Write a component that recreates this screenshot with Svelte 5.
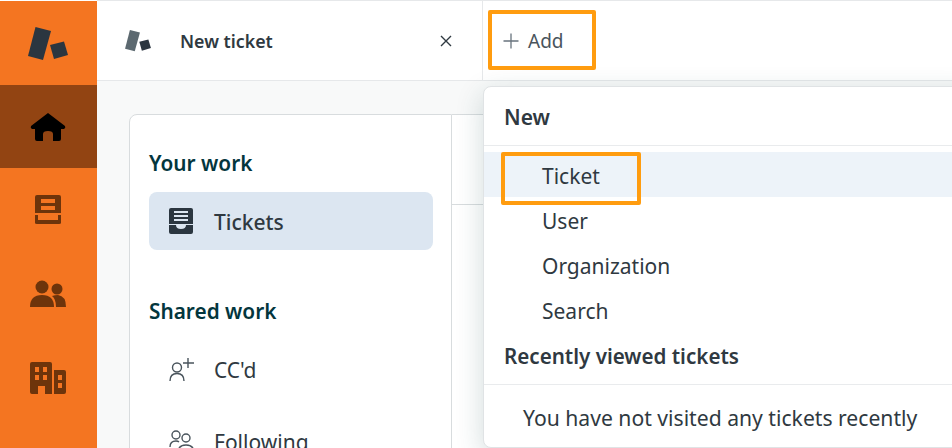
<script>
  const navItems = [
    { id: 'home', active: true },
    { id: 'inbox' },
    { id: 'users' },
    { id: 'org' }
  ]
  const newItems = ['Ticket', 'User', 'Organization', 'Search']
</script>

{#snippet logo(a, b)}
  <svg viewBox="0 0 40 34" width="40" height="34">
    <path fill={a} d="M7.500 0 L23 4 L15 33 L0 29 Z" />
    <path fill={b} d="M22 18 L36 14.500 L40 28 L26 32 Z" />
  </svg>
{/snippet}

<div class="app">
  <nav class="sidebar">
    <div class="brand">{@render logo('#2b3640', '#2b3640')}</div>
    {#each navItems as item}
      <div class="nav-item" class:active={item.active}>
        {#if item.id === 'home'}
          <svg viewBox="0 0 36 30" width="36" height="30"><path fill="#000" d="M18 1 L35 14 Q36 16 34 17 L31 17 V27 Q31 29 29 29 H23 V22 Q23 19 18 19 Q13 19 13 22 V29 H7 Q5 29 5 27 V17 L2 17 Q0 16 1 14 Z" /></svg>
        {:else if item.id === 'inbox'}
          <svg viewBox="0 0 26 30" width="26" height="30"><path fill="#6d340b" fill-rule="evenodd" d="M2 0 H24 Q26 0 26 2 V18 H0 V2 Q0 0 2 0 Z M6 4 V8 H20 V4 Z M6 11 V15 H20 V11 Z" /><path fill="#6d340b" d="M0 20 H3 V25 H23 V20 H26 V28 Q26 29 24 29 H2 Q0 29 0 28 Z" /></svg>
        {:else if item.id === 'users'}
          <svg viewBox="0 0 36 28" width="36" height="28"><circle cx="12" cy="7" r="6.500" fill="#6d340b" /><circle cx="27" cy="9" r="5.500" fill="#6d340b" /><path fill="#6d340b" d="M0 27 Q0 15 12 15 Q24 15 24 27 Z" /><path fill="#6d340b" d="M26 27 Q26 19 22 16 Q25 15 28 15 Q36 16 36 27 Z" /></svg>
        {:else}
          <svg viewBox="0 0 36 32" width="36" height="32"><path fill="#6d340b" fill-rule="evenodd" d="M2 0 H20 Q22 0 22 2 V32 H15 V24 H8 V32 H2 Q0 32 0 30 V2 Q0 0 2 0 Z M5 5 V10 H9 V5 Z M13 5 V10 H17 V5 Z M5 13 V18 H9 V13 Z M13 13 V18 H17 V13 Z" /><path fill="#6d340b" fill-rule="evenodd" d="M24 8 H34 Q36 8 36 10 V30 Q36 32 34 32 H24 Z M28 13 V18 H32 V13 Z M28 21 V26 H32 V21 Z" /></svg>
        {/if}
      </div>
    {/each}
  </nav>

  <main class="main">
    <header class="tabs">
      <div class="tab">
        <span class="tab-logo">{@render logo('#5c6970', '#2b3640')}</span>
        <span class="tab-title">New ticket</span>
        <svg class="close" viewBox="0 0 12 12" width="12" height="12"><path d="M1 1 L11 11 M11 1 L1 11" stroke="#2f3941" stroke-width="1.400" fill="none" /></svg>
      </div>
      <div class="add">
        <svg viewBox="0 0 16 16" width="16" height="16"><path d="M8 0.500 V15.500 M0.500 8 H15.500" stroke="#68737d" stroke-width="1.300" fill="none" /></svg>
        <span>Add</span>
      </div>
    </header>

    <div class="content">
      <section class="panel">
        <h2>Your work</h2>
        <div class="views selected">
          <svg viewBox="0 0 24 26" width="24" height="26"><path fill="#2b3640" fill-rule="evenodd" d="M2 0 H22 Q24 0 24 2 V16 H0 V2 Q0 0 2 0 Z M5 3 V5 H19 V3 Z M5 7 V9 H19 V7 Z M5 11 V13 H19 V11 Z" /><path fill="#2b3640" d="M0 17 H7 Q7 21 12 21 Q17 21 17 17 H24 V24 Q24 26 22 26 H2 Q0 26 0 24 Z" /></svg>
          <span>Tickets</span>
        </div>
        <h2 class="shared">Shared work</h2>
        <div class="views first">
          <svg viewBox="0 0 26 24" width="26" height="24" fill="none" stroke="#49545c" stroke-width="1.400"><circle cx="8" cy="9.500" r="4.500" /><path d="M1 23 Q1 15.500 8 15.500 Q15 15.500 15 23" /><path d="M19 0 V10 M14 5 H25" /></svg>
          <span>CC'd</span>
        </div>
        <div class="views">
          <svg viewBox="0 0 26 24" width="26" height="24" fill="none" stroke="#49545c" stroke-width="1.400"><circle cx="7" cy="5" r="4" /><circle cx="17" cy="8" r="4" /><path d="M1 17 Q1 11 7 11 Q9 11 10 12" /><path d="M9 23 Q9 15 17 15 Q25 15 25 23" /></svg>
          <span>Following</span>
        </div>
      </section>
      <section class="list">
        <div class="list-head"></div>
      </section>
    </div>
  </main>

  <aside class="popover">
    <div class="pop-head">New</div>
    <ul>
      {#each newItems as label, i}
        <li class:hover={i === 0}>{label}</li>
      {/each}
    </ul>
    <div class="pop-sub">Recently viewed tickets</div>
    <p class="empty">You have not visited any tickets recently</p>
  </aside>

  <div class="mark mark-add"></div>
  <div class="mark mark-ticket"></div>
</div>

<style>
  :global(body) {
    margin: 0;
    background: #fff;
  }

  .app {
    position: relative;
    display: flex;
    width: 952px;
    height: 448px;
    overflow: hidden;
    font-family: "Noto Sans", "Open Sans", sans-serif;
    color: #2f3941;
  }

  .sidebar {
    flex: none;
    width: 97px;
    background: #f47521;
    margin-top: 1px;
  }

  .brand {
    height: 84px;
    display: flex;
    align-items: center;
    justify-content: center;
    padding-right: 2px;
    box-sizing: border-box;
  }

  .brand svg {
    margin-top: 2px;
  }

  .nav-item {
    height: 84px;
    display: flex;
    align-items: center;
    justify-content: center;
    padding-right: 2px;
    box-sizing: border-box;
  }

  .nav-item.active {
    height: 83px;
    background: #924412;
  }

  .main {
    flex: 1;
    display: flex;
    flex-direction: column;
    min-width: 0;
  }

  .tabs {
    height: 79px;
    flex: none;
    display: flex;
    border-top: 1px solid #e6e8ea;
    border-bottom: 1px solid #e6e8ea;
    background: #fff;
    box-sizing: content-box;
  }

  .tab {
    width: 386px;
    display: flex;
    align-items: center;
    padding-left: 28px;
    box-sizing: border-box;
    border-right: 1px solid #e6e8ea;
  }

  .tab-logo svg {
    display: block;
    width: 26px;
    height: 22px;
  }

  .tab-title {
    margin-left: 29px;
    font-size: 17.800px;
    font-weight: 600;
    color: #2f3941;
  }

  .close {
    margin-left: auto;
    margin-right: 30px;
  }

  .add {
    display: flex;
    align-items: center;
    gap: 9px;
    padding-left: 20px;
    font-size: 19px;
    color: #49545c;
  }

  .content {
    flex: 1;
    display: flex;
    padding: 33px 0 0 32px;
    background: #f8f9f9;
    min-height: 0;
  }

  .panel {
    width: 323px;
    height: 400px;
    flex: none;
    box-sizing: border-box;
    padding: 33px 18px 0 19px;
    background: #fff;
    border: 1px solid #d8dcde;
    border-radius: 8px 0 0 0;
  }

  h2 {
    margin: 0;
    font-size: 20.800px;
    line-height: 30px;
    font-weight: 600;
    color: #03363d;
  }

  h2.shared {
    margin-top: 46px;
  }

  .views {
    display: flex;
    align-items: center;
    height: 58px;
    margin-top: 14px;
    padding-left: 20px;
    font-size: 21px;
    color: #2f3941;
    border-radius: 8px;
  }

  .views.first {
    margin-top: 15px;
  }

  .views span {
    margin-left: 19px;
  }

  .views svg {
    flex: none;
  }

  .views.selected span {
    margin-left: 21px;
    padding-top: 2px;
  }

  .views.selected {
    background: #dce6f1;
    font-weight: 500;
  }

  .list {
    flex: 1;
    background: #fff;
    border-top: 1px solid #d8dcde;
  }

  .list-head {
    height: 89px;
    border-bottom: 1px solid #d8dcde;
  }

  .popover {
    position: absolute;
    left: 483px;
    top: 86px;
    width: 500px;
    height: 362px;
    background: #fff;
    border: 1px solid #e0e3e5;
    border-radius: 8px;
    box-sizing: border-box;
    box-shadow: 0 8px 28px rgba(23, 73, 77, 0.2);
  }

  .pop-head {
    height: 58px;
    line-height: 60px;
    padding-left: 20px;
    font-size: 21px;
    font-weight: 600;
    color: #2f3941;
    border-bottom: 1px solid #e9ebed;
  }

  ul {
    list-style: none;
    margin: 6px 0 0;
    padding: 0;
  }

  li {
    height: 45px;
    line-height: 49px;
    padding-left: 58px;
    font-size: 21px;
    color: #2f3941;
  }

  li.hover {
    background: #edf3f9;
  }

  .pop-sub {
    height: 52px;
    line-height: 49px;
    padding-left: 20px;
    font-size: 20.600px;
    font-weight: 600;
    color: #2f3941;
    border-bottom: 1px solid #e9ebed;
  }

  .empty {
    margin: 0;
    padding: 18px 0 0 39px;
    font-size: 21.150px;
    line-height: 30px;
    color: #2f3941;
  }

  .mark {
    position: absolute;
    box-sizing: border-box;
    border: 4px solid #ff9c0f;
    border-radius: 2px;
  }

  .mark-add {
    left: 488px;
    top: 10px;
    width: 108px;
    height: 60px;
  }

  .mark-ticket {
    left: 501px;
    top: 152px;
    width: 140px;
    height: 53px;
  }
</style>
